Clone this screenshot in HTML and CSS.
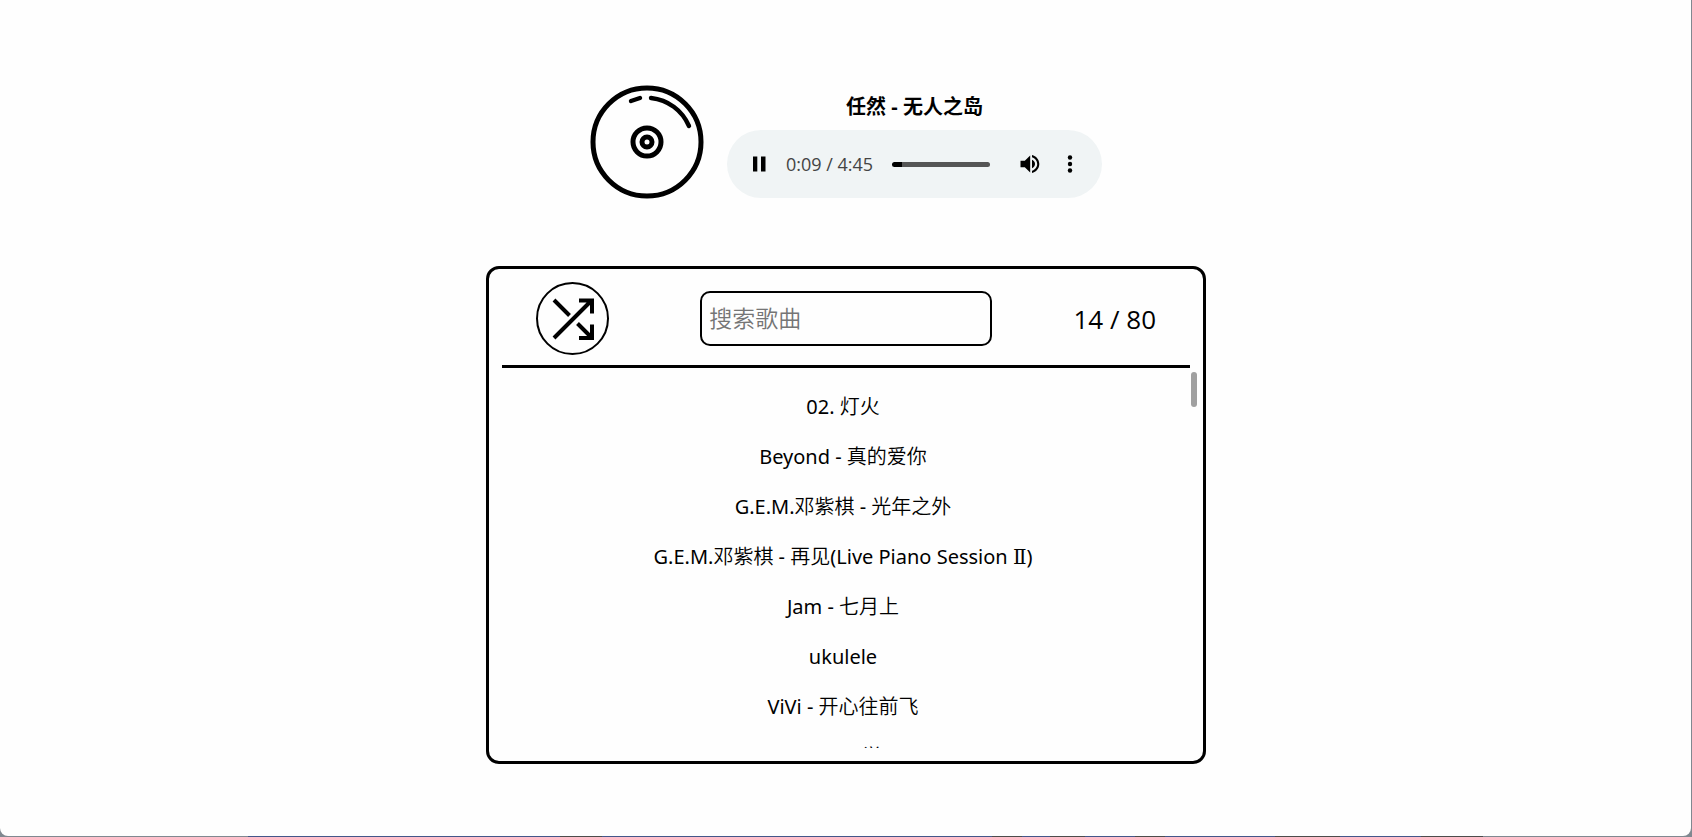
FILE: index.html
```html
<!DOCTYPE html>
<html lang="zh-CN">
<head>
<meta charset="utf-8">
<title>音乐播放器</title>
<link rel="stylesheet" href="styles.css">
</head>
<body>
<main class="page">
  <section class="player">
    <svg class="disc" viewBox="0 0 114 114" fill="none" stroke="#000" stroke-width="5" stroke-linecap="round" aria-hidden="true">
      <circle cx="57" cy="57" r="54"/>
      <circle cx="57" cy="57" r="14"/>
      <circle cx="57" cy="57" r="5"/>
      <path d="M41 16 50 13M61 13C78 15 92 25 99 41" stroke-width="4.4"/>
    </svg>
    <div class="now">
      <h1 class="title">任然 - 无人之岛</h1>
      <div class="audio">
        <button class="ctl" type="button" aria-label="暂停">
          <svg viewBox="0 0 24 24" width="24" height="24"><path d="M6 4.500h4.300v15H6zM14 4.500h4.500v15H14z"/></svg>
        </button>
        <span class="time">0:09 / 4:45</span>
        <input class="seek" type="range" min="0" max="285" value="9" aria-label="进度">
        <button class="ctl" type="button" aria-label="音量">
          <svg viewBox="0 0 24 24" width="24" height="24"><path d="M2.500 8.800v6.400h4.300l5.400 5.300v-17L6.800 8.800zm14.500 3.200A4.800 4.800 0 0 0 14 7.700v8.600c1.800-.7 3-2.400 3-4.300zM14 3v2.200c2.900.9 5.200 3.600 5.200 6.800s-2.300 5.900-5.200 6.800V21c4.100-.9 7.300-4.600 7.300-9S18.100 3.900 14 3z"/></svg>
        </button>
        <button class="ctl more" type="button" aria-label="更多">
          <svg viewBox="0 0 24 24" width="24" height="24"><circle cx="12" cy="5.500" r="2.200"/><circle cx="12" cy="12" r="2.200"/><circle cx="12" cy="18.500" r="2.200"/></svg>
        </button>
      </div>
    </div>
  </section>

  <section class="panel">
    <header class="bar">
      <button class="shuffle" type="button" aria-label="随机播放">
        <svg viewBox="0 0 44 44" width="44" height="44" fill="none" stroke="#000" stroke-width="4"><path d="M3 3 18.500 18.500M3 41 41 3M28 3.500H41V16.500M26.500 26.500 41 41M28 41H41V27.500"/></svg>
      </button>
      <input class="search" type="text" placeholder="搜索歌曲" aria-label="搜索歌曲">
      <span class="count">14 / 80</span>
    </header>
    <div class="songs">
      <ul class="list">
        <li><button class="song" type="button">02. 灯火</button></li>
        <li><button class="song" type="button">Beyond - 真的爱你</button></li>
        <li><button class="song" type="button">G.E.M.邓紫棋 - 光年之外</button></li>
        <li><button class="song" type="button">G.E.M.邓紫棋 - 再见(Live Piano Session <span class="numeral">Ⅱ</span>)</button></li>
        <li><button class="song" type="button">Jam - 七月上</button></li>
        <li><button class="song" type="button">ukulele</button></li>
        <li><button class="song" type="button">ViVi - 开心往前飞</button></li>
        <li><button class="song" type="button">一一一 - 学一</button></li>
      </ul>
      <div class="thumb"></div>
    </div>
  </section>
</main>
</body>
</html>
```
FILE: styles.css
```css
* { box-sizing: border-box; }

body {
  margin: 0;
  min-height: 100vh;
  display: flex;
  padding: 0 1px 1px 0;
  background: linear-gradient(90deg, #808890 248px, #44568a 248px 560px, #4c4c4c 560px 602px, #44568a 602px 992px, #4c4c4c 992px 1022px, #44568a 1022px 1050px, #4c4c4c 1050px 1085px, #44568a 1085px 1135px, #4c4c4c 1135px 1165px, #44568a 1165px 1275px, #4c4c4c 1275px 1340px, #44568a 1340px 1421px, #4c4c4c 1421px 1483px, #808890 1483px);
  color: #000;
  font-family: "Noto Sans", "Noto Sans CJK SC", sans-serif;
}

button {
  margin: 0;
  padding: 0;
  border: 0;
  background: none;
  color: inherit;
  font: inherit;
  cursor: pointer;
}

svg { display: block; }

.page {
  flex: 1;
  display: flex;
  flex-direction: column;
  align-items: center;
  gap: 67px;
  padding: 85px 16px 72px 17px;
  background: #fefefe;
  border-radius: 0 0 8px 8px;
}

.player { display: flex; gap: 23px; }

.disc { width: 114px; height: 114px; }

.now { width: 375px; }

.title {
  margin: 7px 0 8px;
  font-size: 20px;
  line-height: 30px;
  font-weight: 700;
  text-align: center;
}

.audio {
  display: flex;
  align-items: center;
  height: 68px;
  padding: 0 20px;
  border-radius: 34px;
  background: #f0f4f5;
}

.time {
  margin: 0 19px 0 15px;
  font-family: "Open Sans", sans-serif;
  font-size: 18px;
  line-height: 24px;
  color: #444;
  white-space: nowrap;
}

.seek {
  flex: 1;
  min-width: 0;
  height: 5px;
  margin: 0 28px 0 0;
  appearance: none;
  border-radius: 3px;
  background: linear-gradient(90deg, #000 10px, #555 10px);
}

.seek::-webkit-slider-thumb { appearance: none; width: 0; height: 0; }

.more { margin-left: 16px; }

.panel {
  width: 100%;
  max-width: 720px;
  padding: 13px;
  border: 3px solid #000;
  border-radius: 13px;
}

.bar {
  display: grid;
  grid-template-columns: 1fr 47% 1fr;
  align-items: center;
  padding: 0 34px 10px;
  border-bottom: 3px solid #000;
}

.shuffle {
  display: grid;
  place-items: center;
  width: 73px;
  height: 73px;
  border: 2px solid #000;
  border-radius: 50%;
}

.search {
  width: 100%;
  height: 55px;
  padding: 0 7px 2px;
  border: 2px solid #000;
  border-radius: 10px;
  background: none;
  font-family: "Noto Sans", "Noto Sans CJK SC DemiLight", "Noto Sans CJK SC", sans-serif;
  font-size: 23px;
}

.search::placeholder { color: #757575; }

.count {
  font-family: "Open Sans", sans-serif;
  font-size: 26px;
  line-height: 36px;
  text-align: right;
}

.songs { position: relative; }

.list {
  height: 380px;
  margin: 0;
  padding: 14px 6px 0 0;
  overflow: hidden;
  list-style: none;
}

.song {
  display: block;
  width: 100%;
  height: 50px;
  font-family: "Noto Sans", "Noto Sans CJK SC DemiLight", "Noto Sans CJK SC Light", "Noto Sans CJK SC", sans-serif;
  font-size: 20px;
  line-height: 30px;
}

.numeral { font-family: "DejaVu Serif", serif; }

.thumb {
  position: absolute;
  top: 4px;
  right: -7px;
  width: 6px;
  height: 35px;
  border-radius: 3px;
  background: #a0a0a0;
}
```
